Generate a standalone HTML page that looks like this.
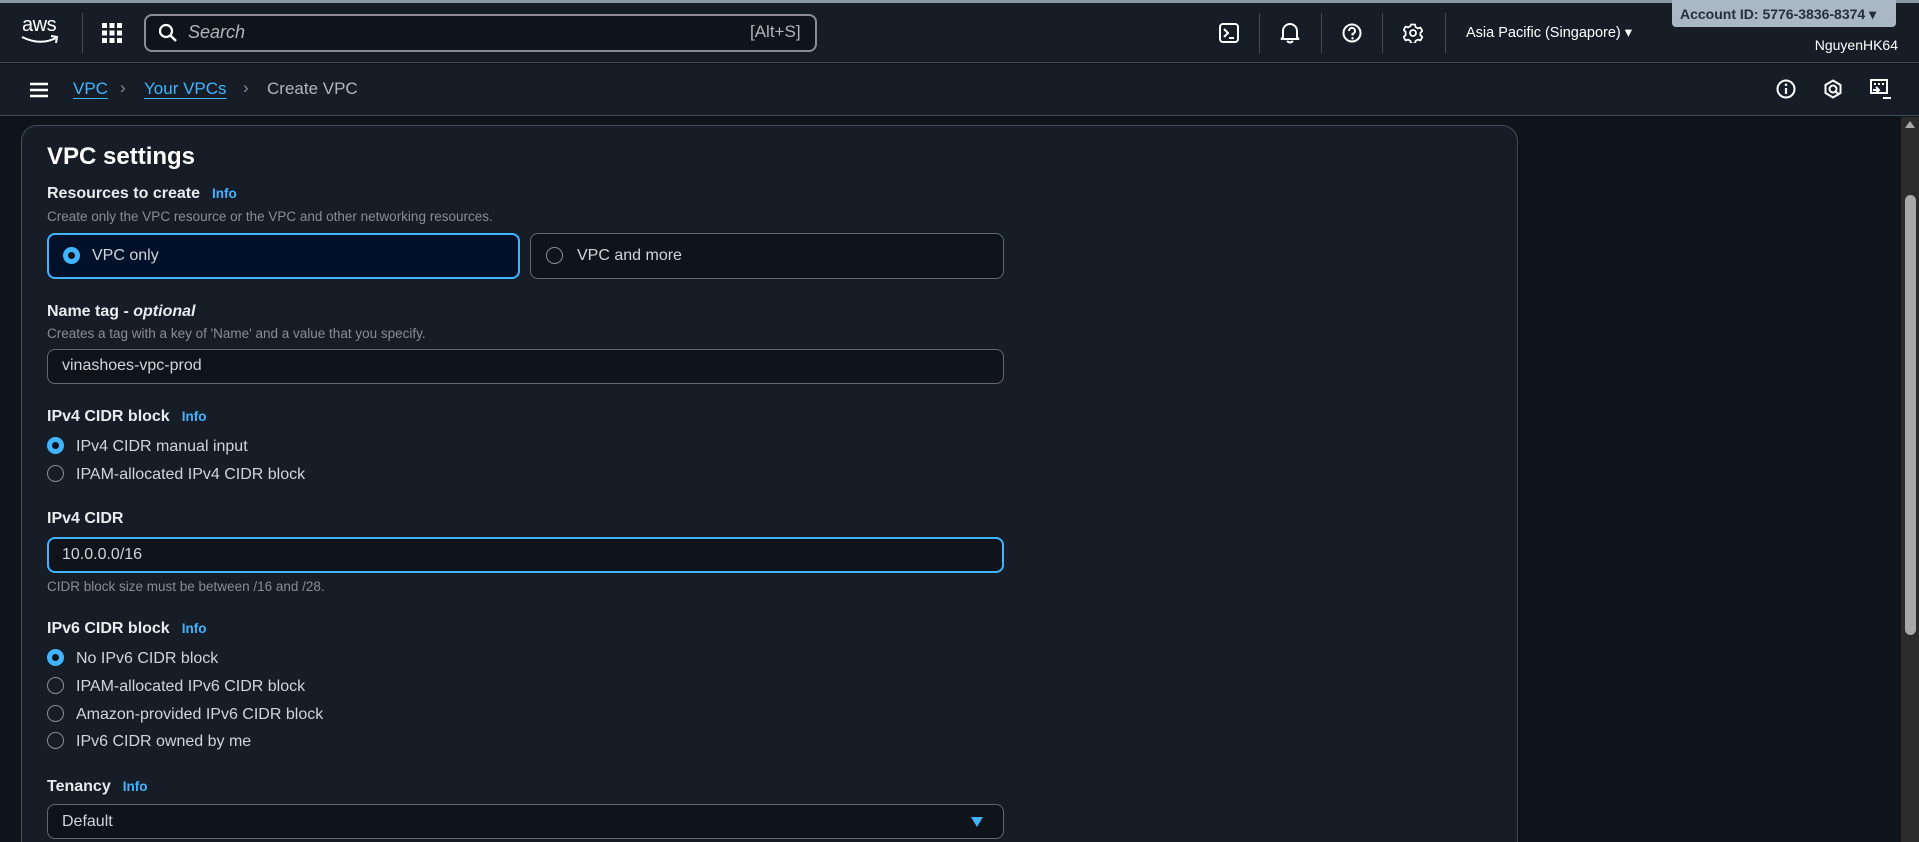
<!DOCTYPE html>
<html style="overflow:hidden;width:1919px;height:842px"><head><meta charset="utf-8"><style>
*{margin:0;padding:0;box-sizing:border-box}
body{width:1919px;height:842px;overflow:hidden;background:#0f141a;font-family:"Liberation Sans",sans-serif;color:#d1d5db;position:relative}
.a{position:absolute;white-space:nowrap}
.lbl{font-weight:bold;font-size:16px;color:#e9ebed}
.desc{font-size:13.5px;color:#8c8c94}
.info{color:#42b4ff;font-size:13.5px;font-weight:bold;margin-left:12px}
.txt{font-size:16px;color:#d1d5db}
.rad{position:absolute;width:17px;height:17px;border-radius:50%;border:1.5px solid #8c8c94}
.rad.on{border:5px solid #42b4ff;background:#0f141a}
.inp{position:absolute;left:47px;width:957px;border:1px solid #656871;border-radius:8px;background:#0f141a}
.vd{position:absolute;top:13px;width:1px;height:40px;background:#414d5c}
</style></head><body>
<div class="a" style="left:0;top:0;width:1919px;height:3px;background:#8d99a8"></div>
<div class="a" style="left:0;top:3px;width:1919px;height:60px;background:#161d26;border-bottom:1px solid #414d5c"></div>
<div class="a" style="left:22px;top:14px;font-size:20px;color:#fff;letter-spacing:-0.5px">aws</div>
<svg class="a" style="left:20px;top:34px" width="42" height="12" viewBox="0 0 42 12"><path d="M2 3 Q20 12 36 4" stroke="#fff" stroke-width="2" fill="none"/><path d="M31 2 L37 3 L36 9" stroke="#fff" stroke-width="2" fill="none"/></svg>
<div class="vd" style="left:82px"></div>
<svg class="a" style="left:102px;top:23px" width="20" height="20"><g fill="#fff"><rect x="0" y="0" width="5" height="5"/><rect x="7.5" y="0" width="5" height="5"/><rect x="15" y="0" width="5" height="5"/><rect x="0" y="7.5" width="5" height="5"/><rect x="7.5" y="7.5" width="5" height="5"/><rect x="15" y="7.5" width="5" height="5"/><rect x="0" y="15" width="5" height="5"/><rect x="7.5" y="15" width="5" height="5"/><rect x="15" y="15" width="5" height="5"/></g></svg>
<div class="a" style="left:144px;top:14px;width:673px;height:38px;border:2px solid #8c8c94;border-radius:8px;background:#0f141a"></div>
<svg class="a" style="left:158px;top:23px" width="20" height="20"><circle cx="8" cy="8" r="6" stroke="#fff" stroke-width="2.2" fill="none"/><path d="M12.5 12.5 L18 18" stroke="#fff" stroke-width="2.4"/></svg>
<div class="a" style="left:188px;top:22px;font-size:18px;font-style:italic;color:#b4b4bb">Search</div>
<div class="a" style="left:750px;top:22px;font-size:17px;color:#b4b4bb">[Alt+S]</div>
<svg class="a" style="left:1219px;top:23px" width="20" height="20"><rect x="1" y="1" width="18" height="18" rx="3" stroke="#fff" stroke-width="2" fill="none"/><path d="M5 6 L9 10 L5 14 M10 15 H15" stroke="#fff" stroke-width="2" fill="none"/></svg>
<div class="vd" style="left:1259px"></div>
<svg class="a" style="left:1280px;top:22px" width="20" height="22"><path d="M3 15 V9 A7 7 0 0 1 17 9 V15 L18.5 17 H1.5 Z" stroke="#fff" stroke-width="2" fill="none" stroke-linejoin="round"/><path d="M7 19 Q10 22 13 19" stroke="#fff" stroke-width="2" fill="none"/></svg>
<div class="vd" style="left:1321px"></div>
<svg class="a" style="left:1342px;top:23px" width="20" height="20"><circle cx="10" cy="10" r="8.5" stroke="#fff" stroke-width="2" fill="none"/><path d="M7 8 A3 3 0 1 1 10.5 10.8 V12.5" stroke="#fff" stroke-width="2" fill="none"/><circle cx="10.5" cy="15.3" r="1.2" fill="#fff"/></svg>
<div class="vd" style="left:1382px"></div>
<svg class="a" style="left:1403px;top:23px" width="20" height="20" viewBox="0 0 20 20"><path d="M8 1.5h4l.6 2.6 2.2 1.3 2.6-.8 2 3.4-2 1.8v2.4l2 1.8-2 3.4-2.6-.8-2.2 1.3-.6 2.6H8l-.6-2.6-2.2-1.3-2.6.8-2-3.4 2-1.8V8.8l-2-1.8 2-3.4 2.6.8 2.2-1.3z" stroke="#fff" stroke-width="1.8" fill="none" stroke-linejoin="round"/><circle cx="10" cy="10" r="3" stroke="#fff" stroke-width="1.8" fill="none"/></svg>
<div class="vd" style="left:1445px"></div>
<div class="a" style="left:1466px;top:25px;font-size:14.5px;color:#fff">Asia Pacific (Singapore) ▾</div>
<div class="a" style="left:1672px;top:0;width:224px;height:27px;background:#aab7c4;border-radius:0 0 4px 4px;font-size:14px;font-weight:bold;color:#232f3e;padding:6px 0 0 8px">Account ID: 5776-3836-8374 ▾</div>
<div class="a" style="right:21px;top:37px;font-size:14px;color:#fff">NguyenHK64</div>
<div class="a" style="left:0;top:64px;width:1919px;height:52px;background:#161d26;border-bottom:1px solid #414d5c"></div>
<svg class="a" style="left:30px;top:82px" width="18" height="16"><path d="M0 2H18M0 8H18M0 14H18" stroke="#fff" stroke-width="2.5"/></svg>
<div class="a" style="left:73px;top:79px;font-size:17px;color:#42b4ff;text-decoration:underline;text-underline-offset:4px">VPC</div>
<div class="a" style="left:120px;top:78px;font-size:17px;color:#8c8c94">›</div>
<div class="a" style="left:144px;top:79px;font-size:17px;color:#42b4ff;text-decoration:underline;text-underline-offset:4px">Your VPCs</div>
<div class="a" style="left:243px;top:78px;font-size:17px;color:#8c8c94">›</div>
<div class="a" style="left:267px;top:79px;font-size:17px;color:#b4b4bb">Create VPC</div>
<svg class="a" style="left:1776px;top:79px" width="20" height="20"><circle cx="10" cy="10" r="8.5" stroke="#fff" stroke-width="2" fill="none"/><path d="M10 9V15" stroke="#fff" stroke-width="2.2"/><circle cx="10" cy="5.8" r="1.3" fill="#fff"/></svg>
<svg class="a" style="left:1823px;top:79px" width="20" height="20"><path d="M10 1.5 L17.5 6 V14 L10 18.5 L2.5 14 V6 Z" stroke="#fff" stroke-width="2" fill="none"/><circle cx="10" cy="10" r="3.5" stroke="#fff" stroke-width="2" fill="none"/><path d="M12.5 12.5 L15.5 15" stroke="#fff" stroke-width="2"/></svg>
<svg class="a" style="left:1870px;top:79px" width="22" height="22"><rect x="1" y="1" width="16" height="13" stroke="#fff" stroke-width="2" fill="none"/><path d="M4 5H6M8 5H10M12 5H14" stroke="#fff" stroke-width="2"/><path d="M3 11 H9 M6 8 L9 11 L6 14" stroke="#fff" stroke-width="2" fill="none"/><path d="M13 19H21" stroke="#fff" stroke-width="2"/></svg>
<div class="a" style="left:1901px;top:117px;width:18px;height:725px;background:#2b2b2b"></div>
<svg class="a" style="left:1904px;top:120px" width="12" height="10"><path d="M6 1 L11 8 H1 Z" fill="#a8a8a8"/></svg>
<div class="a" style="left:1905px;top:195px;width:11px;height:440px;background:#a8a8a8;border-radius:6px"></div>
<div class="a" style="left:21px;top:125px;width:1497px;height:717px;background:#161d26;border:1px solid #414d5c;border-bottom:none;border-radius:16px 16px 0 0"></div>
<div class="a" style="left:47px;top:143px;font-size:24px;font-weight:bold;color:#fff">VPC settings</div>
<div class="a lbl" style="left:47px;top:185px">Resources to create<span class="info">Info</span></div>
<div class="a desc" style="left:47px;top:209px">Create only the VPC resource or the VPC and other networking resources.</div>
<div class="a" style="left:47px;top:233px;width:473px;height:46px;border:2px solid #42b4ff;border-radius:8px;background:#001129"></div>
<div class="rad on" style="left:63px;top:247px"></div>
<div class="a txt" style="left:92px;top:247px">VPC only</div>
<div class="a" style="left:530px;top:233px;width:474px;height:46px;border:1px solid #656871;border-radius:8px;background:#0f141a"></div>
<div class="rad" style="left:546px;top:247px"></div>
<div class="a txt" style="left:577px;top:247px">VPC and more</div>
<div class="a lbl" style="left:47px;top:303px">Name tag - <i>optional</i></div>
<div class="a desc" style="left:47px;top:326px">Creates a tag with a key of 'Name' and a value that you specify.</div>
<div class="inp" style="top:349px;height:35px"></div>
<div class="a txt" style="left:62px;top:357px">vinashoes-vpc-prod</div>
<div class="a lbl" style="left:47px;top:408px">IPv4 CIDR block<span class="info">Info</span></div>
<div class="rad on" style="left:47px;top:437px"></div>
<div class="a txt" style="left:76px;top:438px">IPv4 CIDR manual input</div>
<div class="rad" style="left:47px;top:465px"></div>
<div class="a txt" style="left:76px;top:466px">IPAM-allocated IPv4 CIDR block</div>
<div class="a lbl" style="left:47px;top:510px">IPv4 CIDR</div>
<div class="inp" style="top:537px;height:36px;border:2px solid #42b4ff"></div>
<div class="a txt" style="left:62px;top:546px">10.0.0.0/16</div>
<div class="a desc" style="left:47px;top:579px">CIDR block size must be between /16 and /28.</div>
<div class="a lbl" style="left:47px;top:620px">IPv6 CIDR block<span class="info">Info</span></div>
<div class="rad on" style="left:47px;top:649px"></div>
<div class="a txt" style="left:76px;top:650px">No IPv6 CIDR block</div>
<div class="rad" style="left:47px;top:677px"></div>
<div class="a txt" style="left:76px;top:678px">IPAM-allocated IPv6 CIDR block</div>
<div class="rad" style="left:47px;top:705px"></div>
<div class="a txt" style="left:76px;top:706px">Amazon-provided IPv6 CIDR block</div>
<div class="rad" style="left:47px;top:732px"></div>
<div class="a txt" style="left:76px;top:733px">IPv6 CIDR owned by me</div>
<div class="a lbl" style="left:47px;top:778px">Tenancy<span class="info">Info</span></div>
<div class="inp" style="top:804px;height:35px"></div>
<div class="a txt" style="left:62px;top:813px">Default</div>
<svg class="a" style="left:970px;top:816px" width="14" height="12"><path d="M1 1 H13 L7 11 Z" fill="#42b4ff"/></svg>
</body></html>
